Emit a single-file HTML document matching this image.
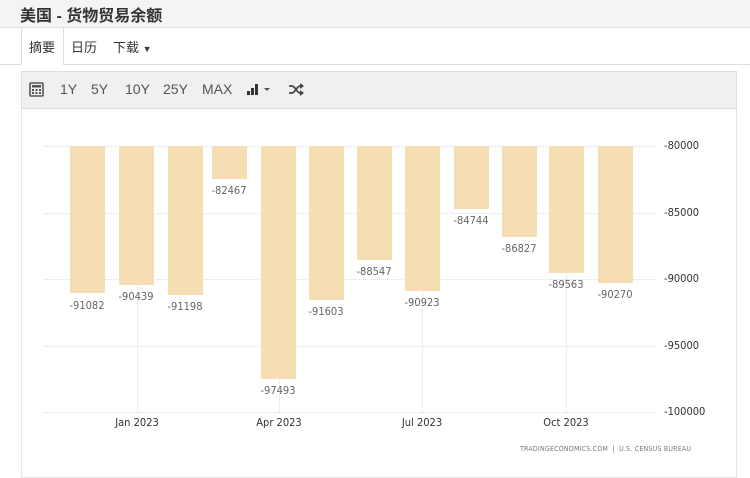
<!DOCTYPE html>
<html><head><meta charset="utf-8"><style>
*{margin:0;padding:0;box-sizing:border-box}
body{width:750px;height:478px;background:#fff;font-family:"Liberation Sans","Noto Sans CJK SC",sans-serif;position:relative;overflow:hidden;color:#333}
.abs{position:absolute}
.title{left:0;top:0;width:750px;height:28px;background:#f4f4f4;border-bottom:1px solid #e2e2e2}
.title span{position:absolute;left:20px;top:2px;font-size:16px;font-weight:bold;color:#333}
.tabline{top:64px;height:1px;background:#ddd}
.tab{left:21px;top:28px;width:43px;height:37px;background:#fff;border-left:1px solid #ddd;border-right:1px solid #ddd}
.t{font-size:13px;color:#333;top:37px}
.tb{left:21px;top:71px;width:716px;height:38px;background:#f0f0f0;border:1px solid #ddd}
.tbt{font-size:14px;color:#555;top:81px}
.panel{left:21px;top:108px;width:716px;height:370px;border-left:1px solid #e6e6e6;border-right:1px solid #e6e6e6;border-bottom:1px solid #e6e6e6}
.bar{background:#f5deb3;width:35px;top:146px}
.v{font-size:11px;color:#666;width:60px;text-align:center;font-family:"DejaVu Sans Condensed","Liberation Sans",sans-serif}
.gl{left:44px;width:612px;height:0;border-top:1px dotted #ddd}
.vl{width:0;border-left:1px dotted #ddd;top:146px;height:266px}
.yl{left:664px;font-size:11px;color:#333;font-family:"DejaVu Sans Condensed","Liberation Sans",sans-serif}
.xl{font-size:11px;color:#333;width:80px;text-align:center;top:416px;font-family:"DejaVu Sans Condensed","Liberation Sans",sans-serif}
</style></head><body>
<div class="abs title"><span>美国 - 货物贸易余额</span></div>
<div class="abs tabline" style="left:0;width:750px"></div>
<div class="abs tab"></div>
<div class="abs t" style="left:29px">摘要</div>
<div class="abs t" style="left:71px">日历</div>
<div class="abs t" style="left:113px">下载 <span style="font-size:9px">▼</span></div>
<div class="abs panel"></div>
<div class="abs tb"></div>
<svg class="abs" style="left:29px;top:82px" width="15" height="15" viewBox="0 0 15 15"><rect x="1" y="1" width="13" height="13" rx="1" fill="none" stroke="#555" stroke-width="1.6"/><rect x="3" y="3" width="9" height="2.5" fill="#555"/><g fill="#555"><rect x="3" y="7" width="2" height="2"/><rect x="6.5" y="7" width="2" height="2"/><rect x="10" y="7" width="2" height="2"/><rect x="3" y="10" width="2" height="2"/><rect x="6.5" y="10" width="2" height="2"/><rect x="10" y="10" width="2" height="2"/></g></svg>
<div class="abs tbt" style="left:60px">1Y</div>
<div class="abs tbt" style="left:91px">5Y</div>
<div class="abs tbt" style="left:125px">10Y</div>
<div class="abs tbt" style="left:163px">25Y</div>
<div class="abs tbt" style="left:202px">MAX</div>
<svg class="abs" style="left:246px;top:83px" width="28" height="13" viewBox="0 0 28 13"><rect x="1" y="8" width="3" height="4" fill="#333"/><rect x="5" y="5" width="3" height="7" fill="#333"/><rect x="9" y="1" width="3" height="11" fill="#333"/><path d="M18 5h6l-3 3z" fill="#555"/></svg>
<svg class="abs" style="left:288px;top:83px" width="16" height="13" viewBox="0 0 16 13"><path d="M1 3h3c3 0 5 7 8 7h2M1 10h3c3 0 5-7 8-7h2" fill="none" stroke="#444" stroke-width="1.8"/><path d="M12 0l4 3-4 3zM12 7l4 3-4 3z" fill="#444"/></svg>

<div class="abs gl" style="top:146px"></div>
<div class="abs gl" style="top:213px"></div>
<div class="abs gl" style="top:279px"></div>
<div class="abs gl" style="top:346px"></div>
<div class="abs gl" style="top:412px"></div>
<div class="abs vl" style="left:137px"></div>
<div class="abs vl" style="left:279px"></div>
<div class="abs vl" style="left:422px"></div>
<div class="abs vl" style="left:566px"></div>

<div class="abs bar" style="left:70px;height:147px"></div>
<div class="abs bar" style="left:119px;height:139px"></div>
<div class="abs bar" style="left:168px;height:149px"></div>
<div class="abs bar" style="left:212px;height:33px"></div>
<div class="abs bar" style="left:261px;height:233px"></div>
<div class="abs bar" style="left:309px;height:154px"></div>
<div class="abs bar" style="left:357px;height:114px"></div>
<div class="abs bar" style="left:405px;height:145px"></div>
<div class="abs bar" style="left:454px;height:63px"></div>
<div class="abs bar" style="left:502px;height:91px"></div>
<div class="abs bar" style="left:549px;height:127px"></div>
<div class="abs bar" style="left:598px;height:137px"></div>

<div class="abs v" style="left:57px;top:299px">-91082</div>
<div class="abs v" style="left:106px;top:290px">-90439</div>
<div class="abs v" style="left:155px;top:300px">-91198</div>
<div class="abs v" style="left:199px;top:184px">-82467</div>
<div class="abs v" style="left:248px;top:384px">-97493</div>
<div class="abs v" style="left:296px;top:305px">-91603</div>
<div class="abs v" style="left:344px;top:265px">-88547</div>
<div class="abs v" style="left:392px;top:296px">-90923</div>
<div class="abs v" style="left:441px;top:214px">-84744</div>
<div class="abs v" style="left:489px;top:242px">-86827</div>
<div class="abs v" style="left:536px;top:278px">-89563</div>
<div class="abs v" style="left:585px;top:288px">-90270</div>

<div class="abs yl" style="top:139px">-80000</div>
<div class="abs yl" style="top:206px">-85000</div>
<div class="abs yl" style="top:272px">-90000</div>
<div class="abs yl" style="top:339px">-95000</div>
<div class="abs yl" style="top:405px">-100000</div>

<div class="abs xl" style="left:97px">Jan 2023</div>
<div class="abs xl" style="left:239px">Apr 2023</div>
<div class="abs xl" style="left:382px">Jul 2023</div>
<div class="abs xl" style="left:526px">Oct 2023</div>
<div class="abs" style="left:520px;top:445px;font-size:7px;color:#777;letter-spacing:0.2px;font-family:'DejaVu Sans Condensed','Liberation Sans',sans-serif">TRADINGECONOMICS.COM &nbsp;|&nbsp; U.S. CENSUS BUREAU</div>
</body></html>
